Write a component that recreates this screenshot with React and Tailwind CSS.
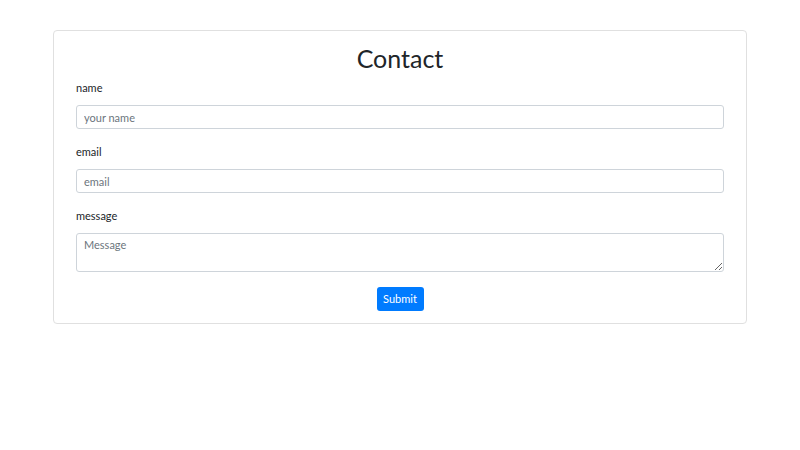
export default function App() {
  const font = { fontFamily: 'Lato, "Noto Sans", sans-serif' };
  const field =
    'block w-full border border-[#ced4da] rounded-[3px] px-[7px] text-[11px] text-[#495057] placeholder:text-[#6c757d] outline-none';
  return (
    <div className="min-h-[450px] bg-white text-[#212529]" style={font}>
      <div className="pt-[30px] flex justify-center">
        <form
          onSubmit={e => e.preventDefault()}
          className="w-[694px] border border-[#e0e0e0] rounded-[4px] px-[22px] pt-[9px] pb-[12px]"
        >
          <h2 className="text-center text-[25px] leading-[36px] font-normal">Contact</h2>

          <div className="mt-[3px]">
            <label className="block text-[11px] leading-[18px] mb-[8px]">name</label>
            <input placeholder="your name" className={`${field} h-[24px]`} />
          </div>

          <div className="mt-[14px]">
            <label className="block text-[11px] leading-[18px] mb-[8px]">email</label>
            <input placeholder="email" className={`${field} h-[24px]`} />
          </div>

          <div className="mt-[14px]">
            <label className="block text-[11px] leading-[18px] mb-[8px]">message</label>
            <textarea placeholder="Message" className={`${field} h-[39px] py-[3px] leading-[16px]`} />
          </div>

          <div className="mt-[15px] flex justify-center">
            <button
              type="submit"
              className="h-[24px] w-[47px] bg-[#007bff] text-white text-[11px] rounded-[3px]"
            >
              Submit
            </button>
          </div>
        </form>
      </div>
    </div>
  );
}
